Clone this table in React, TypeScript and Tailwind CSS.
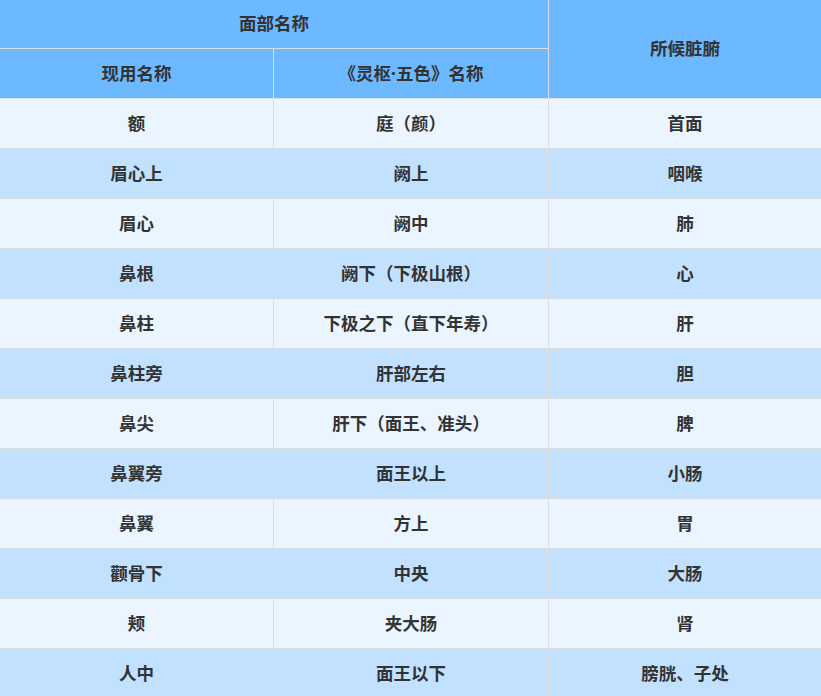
const rows: [string, string, string][] = [
  ["额", "庭（颜）", "首面"],
  ["眉心上", "阙上", "咽喉"],
  ["眉心", "阙中", "肺"],
  ["鼻根", "阙下（下极山根）", "心"],
  ["鼻柱", "下极之下（直下年寿）", "肝"],
  ["鼻柱旁", "肝部左右", "胆"],
  ["鼻尖", "肝下（面王、准头）", "脾"],
  ["鼻翼旁", "面王以上", "小肠"],
  ["鼻翼", "方上", "胃"],
  ["颧骨下", "中央", "大肠"],
  ["颊", "夹大肠", "肾"],
  ["人中", "面王以下", "膀胱、子处"],
];

export default function App() {
  return (
    <div
      className="w-[821px] h-[696px] overflow-hidden bg-white"
      style={{ fontFamily: '"Noto Sans", "Noto Sans CJK SC", sans-serif' }}
    >
      <table className="w-[821px] table-fixed border-separate border-spacing-0 text-[17.5px] leading-none font-bold text-[#333]">
        <colgroup>
          <col className="w-[274px]" />
          <col className="w-[275px]" />
          <col className="w-[272px]" />
        </colgroup>
        <thead>
          <tr className="bg-[#6db9ff]">
            <th
              colSpan={2}
              className="h-[49px] border-b border-r border-[#ddd] text-center align-middle"
            >
              面部名称
            </th>
            <th rowSpan={2} className="border-b border-[#ddd] text-center align-middle">
              所候脏腑
            </th>
          </tr>
          <tr className="bg-[#6db9ff]">
            <th className="h-[50px] border-b border-r border-[#ddd] text-center align-middle">
              现用名称
            </th>
            <th className="h-[50px] border-b border-r border-[#ddd] text-center align-middle">
              《灵枢·五色》名称
            </th>
          </tr>
        </thead>
        <tbody>
          {rows.map((r, i) => (
            <tr key={r[0]} className={i % 2 === 0 ? "bg-[#eaf5ff]" : "bg-[#c2e1ff]"}>
              <td className="h-[50px] border-b border-r border-[#ddd] text-center align-middle">
                {r[0]}
              </td>
              <td className="h-[50px] border-b border-r border-[#ddd] text-center align-middle">
                {r[1]}
              </td>
              <td className="h-[50px] border-b border-[#ddd] text-center align-middle">
                {r[2]}
              </td>
            </tr>
          ))}
        </tbody>
      </table>
    </div>
  );
}
